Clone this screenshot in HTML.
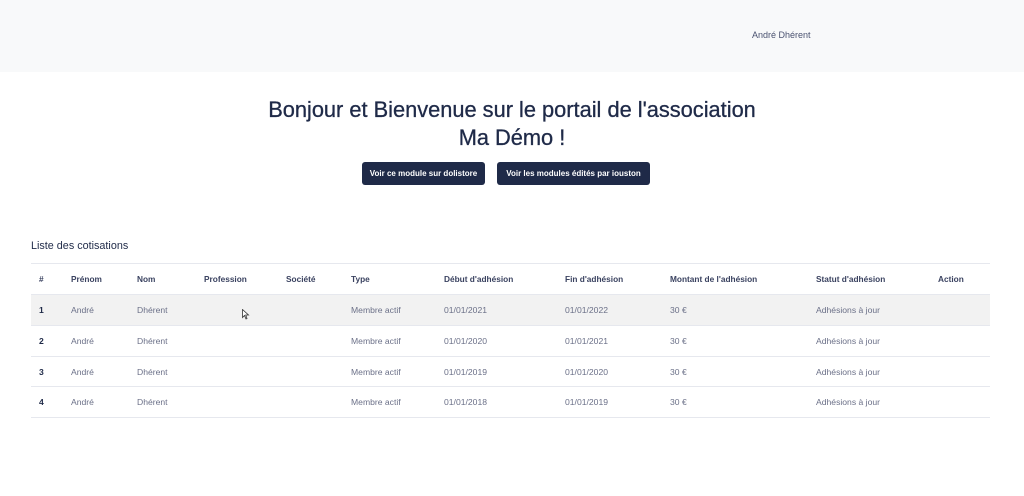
<!DOCTYPE html>
<html><head><meta charset="utf-8"><style>
body{margin:0;width:1024px;height:496px;background:#fff;font-family:"Liberation Sans",sans-serif;color:#1f2a48;position:relative;overflow:hidden}
.hdr{position:absolute;left:0;top:0;width:1024px;height:72px;background:#f8f9fa}
.user{position:absolute;left:752px;top:30px;font-size:9px;color:#4a5270}
h1{position:absolute;left:0;width:1024px;top:96px;margin:0;text-align:center;font-size:21.8px;font-weight:normal;line-height:28px;color:#1f2a48;-webkit-text-stroke:0.3px #1f2a48}
.btn{position:absolute;top:162px;height:23px;background:#1f2a48;color:#fff;font-size:8px;font-weight:bold;line-height:23px;text-align:center;border-radius:3px}
.lt{position:absolute;left:31px;top:240px;font-size:10.8px;color:#1f2a48}
.row{position:absolute;left:31px;width:959px;border-top:1px solid #e6e8ee;font-size:8.6px;color:#6b7088}
.row span{position:absolute;top:10px}
.h span{font-weight:bold;color:#3a4260;font-size:8.3px}
.b{font-weight:bold;color:#1f2a48}
</style></head><body>
<div class="hdr"><div class="user">André Dhérent</div></div>
<h1>Bonjour et Bienvenue sur le portail de l'association<br>Ma Démo !</h1>
<div class="btn" style="left:362px;width:123px">Voir ce module sur dolistore</div>
<div class="btn" style="left:497px;width:153px">Voir les modules édités par iouston</div>
<div class="lt">Liste des cotisations</div>
<div class="row h" style="top:263px;height:31px"><span style="left:8px">#</span><span style="left:40px">Prénom</span><span style="left:106px">Nom</span><span style="left:173px">Profession</span><span style="left:255px">Société</span><span style="left:320px">Type</span><span style="left:413px">Début d'adhésion</span><span style="left:534px">Fin d'adhésion</span><span style="left:639px">Montant de l'adhésion</span><span style="left:785px">Statut d'adhésion</span><span style="left:907px">Action</span></div>
<div class="row" style="top:294px;height:31px;background:#f2f2f2"><span class="b" style="left:8px">1</span><span style="left:40px">André</span><span style="left:106px">Dhérent</span><span style="left:320px">Membre actif</span><span style="left:413px">01/01/2021</span><span style="left:534px">01/01/2022</span><span style="left:639px">30 €</span><span style="left:785px">Adhésions à jour</span></div>
<div class="row" style="top:325px;height:30px"><span class="b" style="left:8px">2</span><span style="left:40px">André</span><span style="left:106px">Dhérent</span><span style="left:320px">Membre actif</span><span style="left:413px">01/01/2020</span><span style="left:534px">01/01/2021</span><span style="left:639px">30 €</span><span style="left:785px">Adhésions à jour</span></div>
<div class="row" style="top:356px;height:30px"><span class="b" style="left:8px">3</span><span style="left:40px">André</span><span style="left:106px">Dhérent</span><span style="left:320px">Membre actif</span><span style="left:413px">01/01/2019</span><span style="left:534px">01/01/2020</span><span style="left:639px">30 €</span><span style="left:785px">Adhésions à jour</span></div>
<div class="row" style="top:386px;height:30px;border-bottom:1px solid #e6e8ee"><span class="b" style="left:8px">4</span><span style="left:40px">André</span><span style="left:106px">Dhérent</span><span style="left:320px">Membre actif</span><span style="left:413px">01/01/2018</span><span style="left:534px">01/01/2019</span><span style="left:639px">30 €</span><span style="left:785px">Adhésions à jour</span></div>
<svg style="position:absolute;left:242px;top:309px" width="8" height="11" viewBox="0 0 8 11"><path d="M0.5 0.5 L0.5 8.5 L2.5 6.5 L4 10 L5 9.5 L3.7 6 L6.5 6 Z" fill="#fff" stroke="#333" stroke-width="0.8"/></svg>
</body></html>
